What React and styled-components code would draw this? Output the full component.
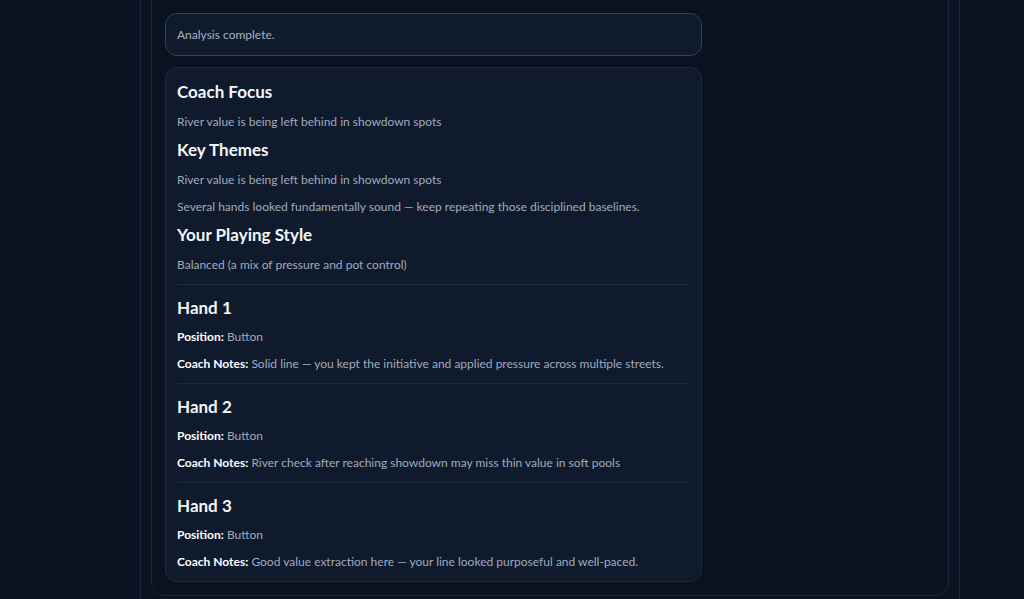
import React from "react";
import styled, { createGlobalStyle } from "styled-components";

const Global = createGlobalStyle`
  html, body { margin: 0; padding: 0; background: #0c1424; }
  body { font-family: "Segoe UI", Lato, "Noto Sans", sans-serif; -webkit-font-smoothing: antialiased; }
  * { box-sizing: border-box; }
`;

const Page = styled.div`
  height: 599px;
  overflow: hidden;
  display: flex;
  justify-content: flex-start;
  padding-left: 140px;
`;

const Column = styled.div`
  width: 820px;
  min-height: 100%;
  background: #0b1322;
  border-left: 1px solid #18243a;
  border-right: 1px solid #18243a;
  padding: 0 10px;
`;

const Panel = styled.div`
  height: 596px;
  background: #0a1220;
  border: 1px solid #172338;
  border-top: none;
  border-radius: 0 0 14px 14px;
  padding: 13px 13px;
  display: flex;
  flex-direction: column;
  gap: 11px;
`;

const Status = styled.div`
  width: 537px;
  height: 43px;
  flex-shrink: 0;
  border: 1px solid #1e4b57;
  border-radius: 12px;
  background: #0f1a2d;
  color: #a7b1c2;
  font-size: 12px;
  display: flex;
  align-items: center;
  padding: 0 11px;
`;

const Report = styled.div`
  width: 537px;
  border: 1px solid #1b2a40;
  border-radius: 12px;
  background: #0f1a2d;
  padding: 14px 11px 11px;
`;

const Heading = styled.h3`
  margin: ${(p) => (p.$first ? "0" : "10.5px")} 0 10.5px;
  font-size: 17px;
  line-height: 20px;
  font-weight: 700;
  color: #f4f6fa;
`;

const Para = styled.p`
  margin: 10px 0 0;
  font-size: 12px;
  line-height: 17px;
  color: #a0abbc;
  &:first-of-type { margin-top: 0; }
`;

const Label = styled.strong`
  color: #ffffff;
  font-weight: 700;
`;

const HandBlock = styled.section`
  margin-top: 11.5px;
  padding-top: 13px;
  border-top: 1px solid #1d2a3d;
  & > h3 { margin-top: 0; margin-bottom: 9.5px; }
`;

const hands = [
  { n: 1, pos: "Button", notes: "Solid line — you kept the initiative and applied pressure across multiple streets." },
  { n: 2, pos: "Button", notes: "River check after reaching showdown may miss thin value in soft pools" },
  { n: 3, pos: "Button", notes: "Good value extraction here — your line looked purposeful and well-paced." },
];

export default function App() {
  return (
    <>
      <Global />
      <Page>
        <Column>
          <Panel>
            <Status>Analysis complete.</Status>
            <Report>
              <Heading $first>Coach Focus</Heading>
              <Para>River value is being left behind in showdown spots</Para>
              <Heading>Key Themes</Heading>
              <Para>River value is being left behind in showdown spots</Para>
              <Para>Several hands looked fundamentally sound — keep repeating those disciplined baselines.</Para>
              <Heading>Your Playing Style</Heading>
              <Para>Balanced (a mix of pressure and pot control)</Para>
              {hands.map((h) => (
                <HandBlock key={h.n}>
                  <Heading>Hand {h.n}</Heading>
                  <Para><Label>Position:</Label> {h.pos}</Para>
                  <Para><Label>Coach Notes:</Label> {h.notes}</Para>
                </HandBlock>
              ))}
            </Report>
          </Panel>
        </Column>
      </Page>
    </>
  );
}
